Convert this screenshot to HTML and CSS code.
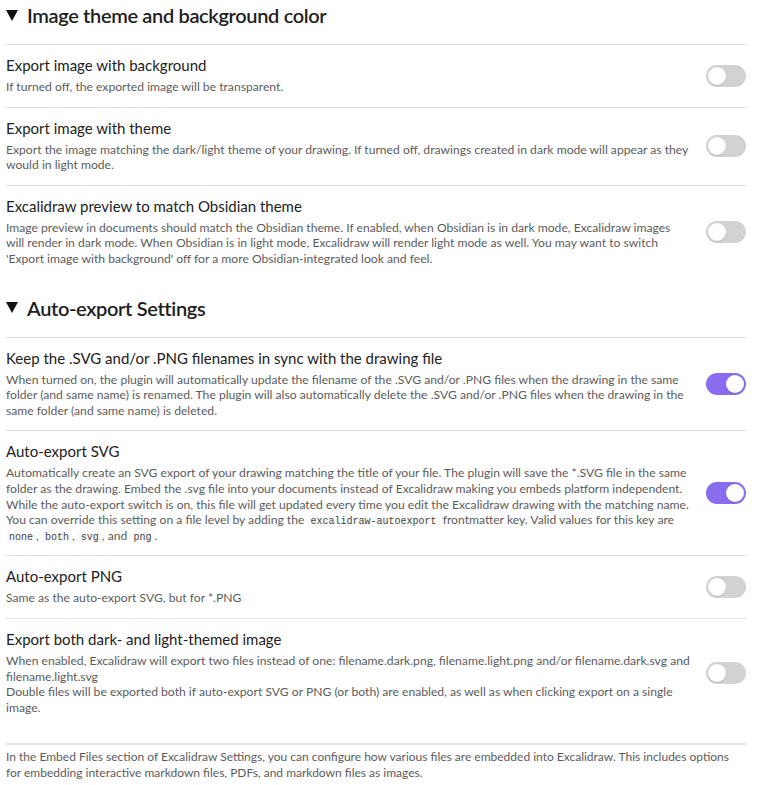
FILE: index.html
```html
<!DOCTYPE html>
<html lang="en">
<head>
<meta charset="utf-8">
<title>Excalidraw settings</title>
<link rel="stylesheet" href="styles.css">
</head>
<body>
<div class="page">
  <section class="group group-first">
    <div class="group-title">
      <svg class="caret" width="12" height="11" viewBox="0 0 12 11"><polygon points="0,0 12,0 6,11" fill="#111"/></svg>
      <span>Image theme and background color</span>
    </div>
    <div class="setting">
      <div class="info">
        <div class="name">Export image with background</div>
        <div class="desc">If turned off, the exported image will be transparent.</div>
      </div>
      <div class="control"><div class="toggle"></div></div>
    </div>
    <div class="setting">
      <div class="info">
        <div class="name">Export image with theme</div>
        <div class="desc">Export the image matching the dark/light theme of your drawing. If turned off, drawings created in dark mode will appear as they would in light mode.</div>
      </div>
      <div class="control"><div class="toggle"></div></div>
    </div>
    <div class="setting">
      <div class="info">
        <div class="name">Excalidraw preview to match Obsidian theme</div>
        <div class="desc">Image preview in documents should match the Obsidian theme. If enabled, when Obsidian is in dark mode, Excalidraw images will render in dark mode. When Obsidian is in light mode, Excalidraw will render light mode as well. You may want to switch 'Export image with background' off for a more Obsidian-integrated look and feel.</div>
      </div>
      <div class="control"><div class="toggle"></div></div>
    </div>
  </section>

  <section class="group">
    <div class="group-title">
      <svg class="caret" width="12" height="11" viewBox="0 0 12 11"><polygon points="0,0 12,0 6,11" fill="#111"/></svg>
      <span>Auto-export Settings</span>
    </div>
    <div class="setting">
      <div class="info">
        <div class="name">Keep the .SVG and/or .PNG filenames in sync with the drawing file</div>
        <div class="desc">When turned on, the plugin will automatically update the filename of the .SVG and/or .PNG files when the drawing in the same folder (and same name) is renamed. The plugin will also automatically delete the .SVG and/or .PNG files when the drawing in the same folder (and same name) is deleted.</div>
      </div>
      <div class="control"><div class="toggle on"></div></div>
    </div>
    <div class="setting">
      <div class="info">
        <div class="name">Auto-export SVG</div>
        <div class="desc">Automatically create an SVG export of your drawing matching the title of your file. The plugin will save the *.SVG file in the same folder as the drawing. Embed the .svg file into your documents instead of Excalidraw making you embeds platform independent. While the auto-export switch is on, this file will get updated every time you edit the Excalidraw drawing with the matching name. You can override this setting on a file level by adding the <code>excalidraw-autoexport</code> frontmatter key. Valid values for this key are <code>none</code>, <code>both</code>, <code>svg</code>, and <code>png</code>.</div>
      </div>
      <div class="control"><div class="toggle on"></div></div>
    </div>
    <div class="setting">
      <div class="info">
        <div class="name">Auto-export PNG</div>
        <div class="desc">Same as the auto-export SVG, but for *.PNG</div>
      </div>
      <div class="control"><div class="toggle"></div></div>
    </div>
    <div class="setting">
      <div class="info">
        <div class="name">Export both dark- and light-themed image</div>
        <div class="desc">When enabled, Excalidraw will export two files instead of one: filename.dark.png, filename.light.png and/or filename.dark.svg and filename.light.svg<br>Double files will be exported both if auto-export SVG or PNG (or both) are enabled, as well as when clicking export on a single image.</div>
      </div>
      <div class="control"><div class="toggle"></div></div>
    </div>
  </section>

  <div class="footer-note">In the Embed Files section of Excalidraw Settings, you can configure how various files are embedded into Excalidraw. This includes options for embedding interactive markdown files, PDFs, and markdown files as images.</div>
</div>
</body>
</html>
```

FILE: styles.css
```css
html, body {
  margin: 0;
  padding: 0;
  background: #ffffff;
}

body {
  font-family: "Lato", "Open Sans", sans-serif;
  color: #222222;
}

.page {
  padding: 0 17px 0 6px;
}

.group {
  margin-top: 16px;
}

.group-first {
  margin-top: 2px;
}

.group-title {
  display: flex;
  align-items: center;
  gap: 9px;
  height: 26px;
  margin-bottom: 16px;
  font-size: 20px;
  font-weight: 600;
  letter-spacing: -0.35px;
  line-height: 26px;
  color: #1e1e1e;
}

.caret {
  display: block;
  flex-shrink: 0;
}

.setting {
  display: flex;
  align-items: center;
  border-top: 1px solid #e3e3e3;
  padding: 12px 0;
}

.info {
  flex: 1 1 auto;
  margin-right: 16px;
}

.name {
  font-size: 15px;
  line-height: 17px;
  color: #222222;
}

.desc {
  padding-top: 5px;
  font-size: 12.15px;
  line-height: 15.6px;
  color: #5c5c5c;
}

code {
  font-family: "Liberation Mono", "DejaVu Sans Mono", monospace;
  font-size: 10px;
  line-height: 1;
  color: #444444;
  background: #fafafa;
  padding: 0 0.3em;
}

.control {
  flex: 0 0 auto;
  display: flex;
  justify-content: flex-end;
}

.toggle {
  position: relative;
  width: 40px;
  height: 22px;
  border-radius: 11px;
  background: #d2d2d2;
}

.toggle::after {
  content: "";
  position: absolute;
  top: 2px;
  left: 2px;
  width: 18px;
  height: 18px;
  border-radius: 50%;
  background: #ffffff;
  box-shadow: 0 1px 1px rgba(0, 0, 0, 0.12);
}

.toggle.on {
  background: #8a6cef;
}

.toggle.on::after {
  left: 20px;
}

.footer-note {
  margin-top: 16px;
  border-top: 2px solid #e6e6e6;
  padding-top: 4px;
  font-size: 12px;
  line-height: 16px;
  color: #5c5c5c;
}
```
